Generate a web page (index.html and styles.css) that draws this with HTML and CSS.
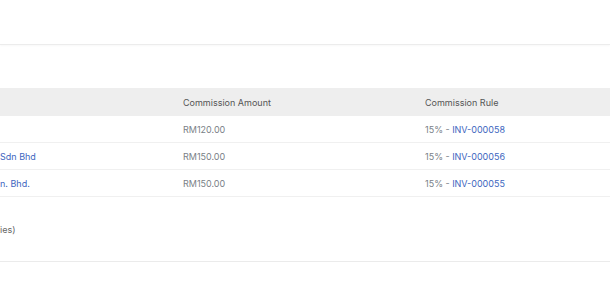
FILE: index.html
```html
<!DOCTYPE html>
<html>
<head>
<meta charset="utf-8">
<link rel="stylesheet" href="styles.css">
</head>
<body>
<div class="page">
  <div class="topbar"></div>
  <div class="spacer"></div>
  <div class="tbl">
    <div class="row head">
      <div class="c1"></div><div class="c2">Commission Amount</div><div class="c3">Commission Rule</div>
    </div>
    <div class="row">
      <div class="c1"></div><div class="c2 muted">RM120.00</div><div class="c3 muted">15% -&nbsp;<a class="link">INV-000058</a></div>
    </div>
    <div class="row">
      <div class="c1"><a class="link">Sdn Bhd</a></div><div class="c2 muted">RM150.00</div><div class="c3 muted">15% -&nbsp;<a class="link">INV-000056</a></div>
    </div>
    <div class="row">
      <div class="c1"><a class="link">n. Bhd.</a></div><div class="c2 muted">RM150.00</div><div class="c3 muted">15% -&nbsp;<a class="link">INV-000055</a></div>
    </div>
  </div>
  <div class="summary">
    <div class="note">ies)</div>
  </div>
</div>
</body>
</html>
```
FILE: styles.css
```css
html, body {
  margin: 0;
  padding: 0;
  background: #ffffff;
  overflow: hidden;
}
body {
  font-family: Inter, "Noto Sans", sans-serif;
  font-size: 9px;
  color: #555;
}
.page {
  width: 610px;
  height: 300px;
  overflow: hidden;
}
.topbar {
  height: 44px;
  border-bottom: 1px solid #ececec;
  box-shadow: 0 1px 2px rgba(0,0,0,0.03);
}
.spacer {
  height: 43px;
}
.tbl {
  display: flex;
  flex-direction: column;
}
.row {
  display: flex;
  align-items: center;
  height: 26px;
  border-bottom: 1px solid #f0f0f0;
  white-space: nowrap;
}
.row.head {
  height: 28px;
  background: #eeeeee;
  border-bottom: none;
  color: #555;
}
.row > div {
  display: flex;
  align-items: center;
  flex: none;
}
.c1 { width: 171px; }
.c2 { width: 230px; padding-left: 12px; }
.c3 { width: 230px; padding-left: 12px; }
.muted { color: #7a7f87; }
.link { color: #4066c0; text-decoration: none; }
.summary {
  height: 37px;
  padding-top: 27px;
  border-bottom: 1px solid #ebebeb;
}
.note {
  color: #666;
  line-height: 12px;
}
```
